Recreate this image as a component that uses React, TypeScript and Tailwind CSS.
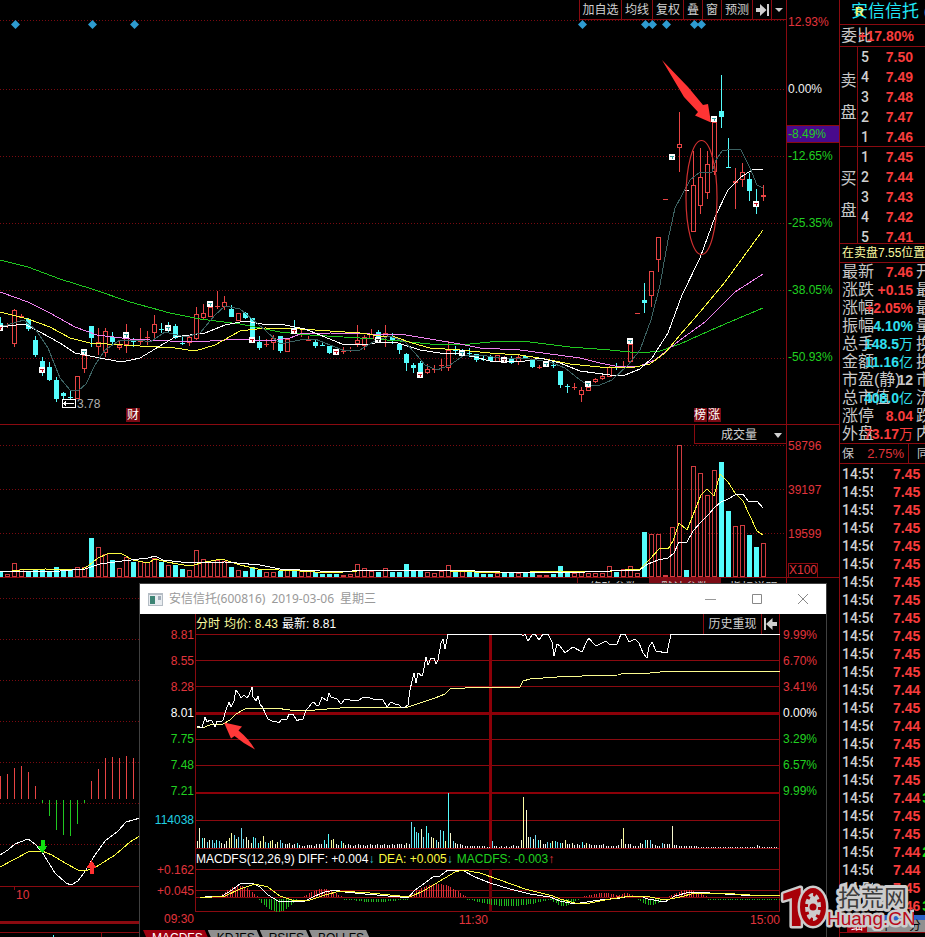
import type { ReactNode } from 'react';

type Candle = [kind: 'r' | 'c' | 'w', high: number, top: number, bottom: number, low: number];

const RED = '#e84444';
const CYAN = '#54fcfc';
const GRID = '#8a0a10';
const STEP = 7;

const candles: Candle[] = [
  ['c', 317, 323, 329, 331], ['r', 323, 325, 325, 328], ['r', 309, 310, 344, 347], ['r', 314, 316, 318, 318],
  ['c', 318, 319, 329, 331], ['c', 336, 340, 355, 357], ['c', 357, 361, 368, 376], ['c', 362, 367, 380, 381],
  ['c', 377, 380, 399, 402], ['c', 392, 393, 396, 399], ['c', 390, 397, 397, 399], ['r', 376, 376, 399, 399],
  ['r', 355, 355, 369, 373], ['c', 326, 326, 338, 347], ['r', 328, 342, 347, 355], ['r', 328, 331, 353, 357],
  ['c', 332, 337, 342, 345], ['r', 341, 345, 348, 350], ['r', 324, 337, 345, 353], ['c', 338, 341, 341, 347],
  ['r', 328, 341, 341, 345], ['r', 331, 337, 337, 345], ['r', 315, 324, 333, 340], ['c', 323, 329, 329, 333],
  ['c', 322, 328, 328, 333], ['c', 324, 326, 338, 339], ['c', 337, 343, 343, 345], ['r', 335, 337, 343, 346],
  ['r', 307, 314, 339, 340], ['r', 304, 313, 318, 319], ['r', 307, 307, 317, 317], ['r', 291, 306, 306, 309],
  ['r', 296, 302, 307, 310], ['c', 305, 309, 317, 317], ['r', 313, 313, 321, 321], ['c', 312, 313, 318, 319],
  ['c', 318, 318, 337, 338], ['c', 336, 342, 348, 350], ['r', 339, 344, 344, 347], ['r', 335, 338, 343, 350],
  ['c', 336, 336, 351, 353], ['r', 339, 339, 352, 352], ['c', 320, 330, 330, 334], ['r', 330, 334, 334, 337],
  ['r', 336, 340, 340, 341], ['c', 340, 342, 346, 348], ['c', 342, 345, 345, 346], ['c', 346, 346, 353, 354],
  ['r', 349, 352, 352, 354], ['r', 347, 351, 351, 354], ['r', 347, 349, 350, 352], ['r', 325, 340, 344, 347],
  ['r', 335, 337, 346, 350], ['r', 329, 334, 339, 339], ['c', 330, 332, 337, 342], ['r', 325, 333, 337, 347],
  ['c', 333, 336, 341, 344], ['c', 343, 344, 350, 354], ['c', 353, 354, 363, 371], ['c', 363, 365, 368, 373],
  ['c', 361, 363, 372, 374], ['r', 364, 369, 373, 374], ['r', 365, 369, 369, 373], ['r', 359, 365, 365, 371],
  ['r', 341, 350, 368, 371], ['c', 346, 350, 350, 355], ['c', 349, 350, 355, 355], ['c', 348, 353, 353, 357],
  ['c', 354, 354, 360, 362], ['c', 356, 359, 359, 361], ['c', 355, 357, 361, 361], ['r', 355, 355, 362, 362],
  ['r', 356, 359, 359, 363], ['c', 356, 359, 363, 364], ['r', 355, 357, 362, 365], ['c', 355, 356, 358, 359],
  ['c', 360, 360, 367, 368], ['r', 365, 367, 367, 369], ['c', 361, 364, 364, 367], ['c', 362, 365, 365, 368],
  ['c', 371, 371, 385, 388], ['c', 384, 386, 386, 393], ['r', 383, 387, 387, 390], ['r', 387, 390, 395, 402],
  ['r', 387, 387, 391, 391], ['r', 378, 379, 382, 383], ['r', 374, 376, 379, 380], ['r', 366, 367, 377, 377],
  ['c', 363, 367, 367, 370], ['r', 361, 366, 366, 368], ['r', 344, 344, 362, 362], ['r', 313, 313, 313, 313],
  ['c', 283, 300, 303, 313], ['r', 271, 271, 296, 307], ['r', 237, 237, 260, 272], ['r', 199, 199, 199, 199],
  ['c', 157, 157, 157, 159], ['r', 112, 144, 148, 172], ['w', 190, 190, 190, 190], ['r', 151, 185, 232, 232],
  ['r', 148, 177, 206, 214], ['r', 151, 164, 193, 199], ['r', 122, 122, 172, 175], ['c', 75, 111, 117, 128],
  ['c', 138, 167, 167, 167], ['r', 168, 181, 183, 209], ['r', 163, 172, 180, 187], ['c', 173, 179, 191, 201],
  ['c', 189, 203, 203, 214], ['r', 185, 195, 197, 201],
];

// white news flags, index / y / inner colour
const flags: [number, number, string][] = [
  [0, 325, '#c01020'], [6, 367, '#c01020'], [12, 349, '#30a0a0'], [18, 332, '#30a0a0'], [24, 325, '#30a0a0'],
  [30, 301, '#30a0a0'], [36, 337, '#c01020'], [42, 328, '#c01020'], [48, 349, '#c01020'], [54, 337, '#303030'],
  [60, 372, '#c01020'], [66, 350, '#30a0a0'], [72, 357, '#804040'], [78, 361, '#30a0a0'], [84, 381, '#30a0a0'],
  [90, 338, '#30a0a0'], [96, 154, '#30a0a0'], [102, 116, '#30a0a0'], [108, 201, '#c01020'],
];

const averages: [string, string][] = [
  ['#20c820', '0,260 28,267 60,279 92,289 130,302 170,313 200,319 240,324 280,332 310,335 360,338 400,341 440,345 470,344 500,341 530,342 570,347 610,350 640,353 660,351 680,344 700,335 725,324 763,308'],
  ['#ee82ee', '0,292 28,302 50,313 75,327 97,335 130,339 170,341 210,341 240,339 270,341 290,338 300,334 330,333 370,334 400,334 430,339 460,344 480,348 520,350 550,354 580,358 600,363 615,366 640,366 655,360 670,348 680,340 705,322 735,292 763,274'],
  ['#fcfc40', '0,312 28,319 50,327 70,338 90,343 140,346 175,348 195,351 215,345 240,331 265,328 300,329 330,331 360,333 380,336 395,337 412,343 430,348 460,350 490,353 520,355 545,359 570,364 600,367 630,368 650,364 665,353 680,335 700,312 725,282 763,230'],
  ['#ffffff', '0,327 24,324 40,332 60,343 75,353 90,356 105,359 122,362 140,358 155,349 175,337 205,333 225,325 245,321 262,324 285,325 305,329 320,335 342,344 370,344 380,342 398,343 420,350 440,353 460,354 475,357 490,361 520,362 540,358 560,363 580,371 610,375 625,375 640,369 652,358 668,333 682,295 700,258 715,217 728,190 741,177 752,170 763,169'],
  ['#3c6262', '0,327 24,320 36,330 48,348 60,378 70,390 78,391 86,384 95,365 105,350 120,340 140,340 150,342 165,332 185,337 200,333 215,315 225,306 240,309 252,319 265,330 280,344 300,340 315,339 335,347 345,351 360,350 375,341 390,336 405,342 415,353 425,365 437,370 450,365 463,356 480,355 500,358 530,359 550,362 565,368 580,380 590,386 600,385 612,380 628,365 640,350 651,320 660,285 668,240 675,208 682,195 690,180 700,172 712,172 716,160 722,151 733,149 741,150 750,168 757,185 763,188'],
];

// bar height in px and colour of each day's volume
const volumes =
  '5c 3r 14r 8r 6c 8c 7c 5c 10c 6c 7c 10r 10r 39c 30r 23r 17c 9r 20r 15c 16r 15r 19r 15c 12r 12c 8c 7r 27r 18r 15r 17r 16r 10c 7r 6c 10c 7c 5r 5r 6c 7r 8c 6r 6r 5c 3c 3c 3c 2r 3r 13r 9r 6r 5c 9r 5c 5c 13c 6c 6c 5r 4r 6r 12r 6c 6r 7c 5c 3c 3c 4r 5c 5c 4r 4c 4c 2r 2r 3c 11c 5c 4r 6r 4r 4r 4r 11r 5c 8r 11r 4r 45c 43r 43r 2r 50r 132r 7c 111r 104r 82r 107r 115c 66c 51r 52r 42c 30c 34r'.split(' ');

const volumeLines: [string, string][] = [
  ['#fcfc40', '0,571 12,571 20,570 45,569 80,570 88,566 98,558 107,554 115,553 122,554 133,560 148,563 155,559 167,562 178,564 190,566 205,562 222,559 240,565 258,569 300,571 330,573 370,570 400,570 450,571 500,573 560,571 600,572 625,570 640,569 650,559 660,548 668,549 673,541 679,523 687,530 695,510 701,495 707,489 714,496 720,474 728,482 735,493 743,501 750,516 757,531 763,535'],
  ['#ffffff', '0,572 30,571 60,571 85,569 100,564 122,561 148,558 155,556 163,560 190,563 225,562 260,565 280,569 320,571 345,572 360,570 400,570 450,570 500,572 560,573 610,571 640,570 648,564 658,560 668,558 674,553 679,542 687,542 693,531 701,522 709,514 714,508 721,502 728,499 735,495 743,494 749,502 757,501 763,508'],
];

const macdBars = [776, 774, 768, 766, 772, 786, 803, 816, 830, 835, 836, 824, 803, 781, 769, 758, 757, 758, 756, 758];

const minutePrice =
  '197,726 202,728 205,717 207,722 210,720 212,721 215,727 217,721 221,722 223,720 226,710 229,702 231,707 234,701 236,690 239,694 241,698 244,695 247,698 249,695 252,687 253,697 256,701 258,696 260,704 263,708 265,713 268,719 272,721 275,721 279,723 282,719 287,719 289,714 293,714 297,721 300,719 303,719 306,710 308,708 312,703 314,702 317,706 319,705 322,697 327,701 329,693 331,697 337,699 341,704 345,699 350,700 358,701 363,697 368,697 375,700 378,699 383,700 387,707 391,702 395,704 398,704 401,707 405,707 408,705 410,690 412,681 414,673 416,683 418,673 422,676 423,673 426,657 428,665 431,658 434,658 436,664 438,660 441,643 443,639 445,649 448,634 521,634 523,636 525,634 528,641 532,635 535,634 539,640 543,634 548,634 552,642 554,656 557,644 560,646 565,653 573,647 582,652 587,641 589,638 592,642 596,646 606,641 609,644 617,644 621,634 625,634 629,642 635,639 639,643 643,653 647,658 649,647 652,642 656,651 667,653 671,634 780,634';
const minuteAverage =
  '197,727 202,728 210,725 223,724 230,720 236,714 245,709 258,708 275,708 290,710 315,710 340,708 370,707 408,707 420,703 435,698 445,694 450,689 465,688 490,687 520,687 523,681 530,679 557,677 582,676 618,675 625,673 650,673 671,671 780,671';

const minuteVolume = [
  7, 20, 10, 10, 6, 8, 8, 5, 8, 7, 5, 4, 7, 10, 15, 13, 9, 11, 20, 9, 11, 8, 5, 11, 10, 5, 7, 12, 6, 5, 7, 8, 4, 6, 8, 5,
  4, 4, 5, 3, 4, 5, 3, 2, 2, 3, 3, 3, 2, 4, 4, 4, 8, 4, 14, 8, 9, 4, 3, 7, 5, 3, 4, 3, 2, 3, 4, 3, 3, 2, 3, 4, 3, 3, 4, 3,
  3, 4, 3, 3, 4, 3, 4, 4, 4, 3, 5, 4, 26, 21, 16, 15, 19, 11, 22, 15, 11, 10, 8, 6, 18, 17, 7, 55, 15, 7, 5, 4, 4, 3, 2,
  2, 2, 2, 2, 2, 2, 2, 2, 1, 1, 7, 2, 2, 1, 2, 1, 2, 1, 2, 3, 2, 2, 8, 51, 38, 11, 11, 9, 13, 8, 8, 4, 4, 6, 5, 7, 7, 6,
  5, 5, 8, 4, 4, 5, 3, 4, 3, 6, 3, 5, 4, 3, 3, 3, 3, 3, 4, 2, 2, 2, 2, 2, 3, 9, 20, 4, 4, 4, 2, 2, 2, 5, 4, 8, 8, 8, 4, 3,
  2, 2, 5, 4, 4, 4, 22, 3, 3, 2, 2, 2, 2, 2, 2, 2, 2, 1, 1, 1, 1, 1, 1, 1, 1, 1, 1, 1, 1, 1, 1, 1, 1, 1, 1, 1, 1, 1, 1,
  1, 1, 3, 2, 1, 1, 1, 1, 1, 1, 1,
];

// from, to, peak (negative runs hang below the zero line)
const histogram: [number, number, number][] = [
  [220, 258, 11], [259, 297, -13], [304, 342, 8], [344, 408, -3], [409, 466, 13], [467, 552, -7],
  [551, 578, -7], [584, 622, 4], [617, 634, 4], [638, 664, -6], [669, 706, 7], [708, 780, -1],
];

type Row = [label: string, value: string, unit: string, color: string, next: string];
const stats: Row[] = [
  ['最新', '7.46', '', 'text-[#f83c3c]', '开'],
  ['涨跌', '+0.15', '', 'text-[#f83c3c]', '最'],
  ['涨幅', '+2.05%', '', 'text-[#f83c3c]', '最'],
  ['振幅', '4.10%', '', 'text-[#30e0f0]', '量'],
  ['总手', '148.5', '万', 'text-[#30e0f0]', '换'],
  ['金额', '11.16', '亿', 'text-[#30e0f0]', '换'],
  ['市盈(静)', '12', '', 'text-[#c8c8c8]', '市'],
  ['总市值', '408.0', '亿', 'text-[#30e0f0]', '流'],
  ['涨停', '8.04', '', 'text-[#f83c3c]', '跌'],
  ['外盘', '73.17', '万', 'text-[#f83c3c]', '内'],
];

const ticks = [
  '7.45', '7.45', '7.45', '7.45', '7.45', '7.45', '7.45', '7.45', '7.45', '7.45', '7.45', '7.45', '7.44', '7.45',
  '7.44', '7.45', '7.45', '7.45', '7.44', '7.45', '7.45', '7.44', '7.44', '7.45', '7.46',
];

function Line({ points, color }: { points: string; color: string }) {
  return <polyline points={points} fill="none" stroke={color} />;
}

function Dotted({ y, width = 786 }: { y: number; width?: number }) {
  return <line x1="0" x2={width} y1={y} y2={y} stroke="#7a0a10" strokeDasharray="1 2" />;
}

function Toolbar() {
  const item = 'flex h-full items-center justify-center border-l border-[#8a0a10] hover:bg-[#300]';
  return (
    <nav className="flex h-5 justify-end text-xs text-[#d0d0d0]">
      <div className="flex h-full border-b border-[#8a0a10]">
        <button className={`${item} w-[42px]`}>加自选</button>
        <button className={`${item} w-[31px]`}>均线</button>
        <button className={`${item} w-[31px]`}>复权</button>
        <button className={`${item} w-[19px]`}>叠</button>
        <button className={`${item} w-[19px]`}>窗</button>
        <button className={`${item} w-[31px]`}>预测</button>
        <button className={`${item} w-[19px]`} aria-label="下一只">
          <svg width="13" height="12" viewBox="0 0 13 12" fill="#d0d0d0">
            <path d="M0 4h4V0l6.500 6L4 12V8H0zM11 0h2v12h-2z" />
          </svg>
        </button>
        <button className={`${item} w-[15px]`} aria-label="更多">
          <svg width="8" height="4" viewBox="0 0 8 4" fill="#d0d0d0">
            <path d="M0 0h8L4 4z" />
          </svg>
        </button>
      </div>
    </nav>
  );
}

function PriceChart() {
  return (
    <section className="relative h-[405px]">
      <svg className="block h-full w-full" viewBox="0 20 786 405" preserveAspectRatio="none" shapeRendering="crispEdges">
        {[20.5, 89.5, 156.5, 223.5, 290.5, 358.5].map((y) => (
          <Dotted key={y} y={y} />
        ))}
        <line x1="0" x2="786" y1="424.5" y2="424.5" stroke={GRID} />
        {[15, 92, 134, 582, 645, 652, 666, 694, 701].map((x) => (
          <path key={x} d={`M${x - 4} 24.5l4.5-4.5 4.5 4.5-4.5 4.5z`} fill="#2e9bd0" shapeRendering="auto" />
        ))}
        {candles.map(([kind, high, top, bottom, low], i) => {
          const x = i * STEP + 0.5;
          const color = kind === 'r' ? RED : kind === 'c' ? CYAN : '#ffffff';
          if (top === bottom) {
            return (
              <path key={i} d={`M${x - 2.5} ${top + 0.5}h5M${x} ${high}V${low}`} stroke={color} />
            );
          }
          return (
            <g key={i} stroke={color}>
              <path d={`M${x} ${high}V${top}M${x} ${bottom}V${low}`} />
              <rect x={x - 2} y={top + 0.5} width="4" height={bottom - top - 1} fill={kind === 'c' ? CYAN : 'none'} />
            </g>
          );
        })}
        {averages.map(([color, points]) => (
          <Line key={color} points={points} color={color} />
        ))}
        {flags.map(([i, y, color]) => (
          <g key={i}>
            <rect x={i * STEP - 3} y={y} width="6" height="6" fill="#ffffff" />
            <path d={`M${i * STEP - 2} ${y + 2.5}h4M${i * STEP + 0.5} ${y + 2}v3`} stroke={color} />
          </g>
        ))}
        <g shapeRendering="auto">
          <ellipse cx="701.5" cy="197.5" rx="15.5" ry="57" fill="none" stroke="#d03030" strokeWidth="1.2" />
          <path d="M662 60L688 87 703 105 708 104 711 122.500 695 115.500 698 112 684 97z" fill="#ff3434" />
        </g>
        <path d="M62.500 399.500h13v8h-13zM64 403.500h10M66 401.500l-2 2 2 2" fill="none" stroke="#ffffff" />
      </svg>
      <span className="absolute top-[376px] left-[77px] text-xs text-[#b0b0b0]">3.78</span>
      <span className="absolute top-[388px] left-[126px] w-3.5 bg-[#7c0a14] text-center text-xs leading-[14px] text-white">财</span>
      <div className="absolute top-[388px] left-[694px] flex gap-px text-xs leading-[14px] text-white">
        <span className="w-[13px] bg-[#7c0a14]">榜</span>
        <span className="w-[13px] bg-[#7c0a14]">涨</span>
      </div>
    </section>
  );
}

function VolumeChart() {
  return (
    <section className="relative h-[153px]">
      <svg className="block h-full w-full" viewBox="0 425 786 153" preserveAspectRatio="none" shapeRendering="crispEdges">
        {[445.5, 489.5, 533.5].map((y) => (
          <Dotted key={y} y={y} />
        ))}
        {volumes.map((v, i) => {
          const height = parseInt(v, 10);
          const x = i * STEP - 2;
          return v.endsWith('c') ? (
            <rect key={i} x={x} y={577 - height} width="5" height={height} fill={CYAN} />
          ) : (
            <rect key={i} x={x + 0.5} y={577.5 - height} width="4" height={height - 1} fill="none" stroke="#d03c40" />
          );
        })}
        {volumeLines.map(([color, points]) => (
          <Line key={color} points={points} color={color} />
        ))}
        <line x1="0" x2="786" y1="577.5" y2="577.5" stroke={GRID} />
      </svg>
      <button className="absolute top-0 right-0 flex h-[19px] w-[92px] items-center justify-end gap-[17px] border-b border-l border-[#8a0a10] bg-black pt-0.5 pr-1 text-xs text-[#d0d0d0]">
        成交量
        <svg width="8" height="5" viewBox="0 0 8 5" fill="#d0d0d0">
          <path d="M0 0h8L4 5z" />
        </svg>
      </button>
    </section>
  );
}

function IndicatorPanel() {
  return (
    <section className="relative min-h-0 flex-1">
      <div className="absolute top-0 right-0 flex h-5 items-center text-xs text-[#c8c8c8]">
        <button className="h-full w-[72px] border-l border-[#8a0a10]">修改参数</button>
        <button className="h-full w-[72px] bg-[#7c0a14]">默认参数</button>
        <button className="h-full w-[65px]">指标说明</button>
      </div>
      <svg className="block h-[359px] w-[140px]" viewBox="0 578 140 359" shapeRendering="crispEdges">
        {[598.5, 639.5, 680.5, 721.5, 762.5, 803.5, 844.5].map((y) => (
          <Dotted key={y} y={y} width={140} />
        ))}
        {macdBars.map((y, i) =>
          y < 800 ? (
            <line key={i} x1={i * STEP + 0.5} x2={i * STEP + 0.5} y1={y} y2="799" stroke={RED} />
          ) : (
            <line key={i} x1={i * STEP + 0.5} x2={i * STEP + 0.5} y1="800" y2={y} stroke="#20c820" />
          ),
        )}
        <Line color="#ffffff" points="0,855 8,850 15,844 28,839 35,844 42,852 55,873 66,883 71,885 78,881 84,873 95,855 105,841 118,831 126,822 140,818" />
        <Line color="#fcfc40" points="0,867 15,859 28,852 42,851 52,855 65,863 78,870 88,870 96,867 115,855 130,842 140,836" />
        <path d="M40.500 840h4v6h3l-5 7.500-5-7.500h3z" fill="#10e010" />
        <path d="M89.500 874h4v-6h3l-5-8-5 8h3z" fill="#ff3030" />
        <path d="M0 886.500h140M14.500 886v4M0 932.500h140M101.500 932v5" stroke={GRID} />
        <path d="M0 922.500h140" stroke={GRID} strokeWidth="3" />
        <path d="M53.500 935v2" stroke={CYAN} />
      </svg>
      <span className="absolute top-[309px] left-4 text-xs text-[#e0343c]">10</span>
    </section>
  );
}

function PriceAxis() {
  const labels = ['12.93%', '0.00%', '-12.65%', '-25.35%', '-38.05%', '-50.93%'];
  const tone = (i: number) => (i === 0 ? 'text-[#e0343c]' : i === 1 ? 'text-[#f0f0f0]' : 'text-[#20d020]');
  return (
    <aside className="flex w-[53px] flex-col border-l border-[#8a0a10] text-xs leading-4">
      <div className="relative h-[424px] pt-[14px]">
        {labels.map((label, i) => (
          <div key={label} className={`h-[67px] pl-px ${tone(i)}`}>{label}</div>
        ))}
        <div className="absolute top-[125px] left-0 h-[18px] w-full border-y border-[#8a0a10] bg-[#480a8c] pl-px text-[#20d020]">-8.49%</div>
      </div>
      <div className="h-[154px] border-y border-[#8a0a10] pt-[13px] pl-px text-[#e0343c]">
        <div className="h-11">58796</div>
        <div className="h-11">39197</div>
        <div className="h-9">19599</div>
        <span className="inline-block border border-[#8a0a10] leading-[13px]">X100</span>
      </div>
    </aside>
  );
}

function Levels({ side, rows }: { side: string; rows: [string, string][] }) {
  return (
    <div className="flex h-full overflow-hidden">
      <div className="flex w-[18px] shrink-0 flex-col items-center justify-center gap-4 border-r border-[#8a0a10] text-base leading-4 text-[#c8c8c8]">
        <span>{side}</span>
        <span>盘</span>
      </div>
      <table className="h-[100px] border-collapse text-sm">
        <tbody>
          {rows.map(([level, price]) => (
            <tr key={level} className="h-5 leading-[18px]">
              <td className="w-[18px] p-0 pl-[3px] font-medium text-[#d0d0d0] font-['Roboto',sans-serif]">{level}</td>
              <td className="w-[37px] p-0 text-right font-bold text-[#f83c3c]">{price}</td>
            </tr>
          ))}
        </tbody>
      </table>
    </div>
  );
}

function Sidebar() {
  return (
    <aside className="flex w-[86px] flex-col overflow-hidden border-l border-[#8a0a10] whitespace-nowrap">
      <h1 className="relative -ml-px h-6 shrink-0 bg-black pl-3 text-[17px] leading-[23px] text-[#20e8f8]">
        安信信托 (
        <span className="absolute top-0 left-4 text-xs leading-6 font-bold text-[#f8f870]">R</span>
      </h1>
      <div className="flex h-[22px] shrink-0 items-center border-t border-[#8a0a10] pl-px">
        <span className="w-0 text-base text-[#c8c8c8]">委比</span>
        <span className="w-[73px] text-right text-sm font-bold text-[#f83c3c]">+17.80%</span>
      </div>
      <div className="h-[100px] shrink-0 border-t border-[#8a0a10]">
        <Levels side="卖" rows={[['5', '7.50'], ['4', '7.49'], ['3', '7.48'], ['2', '7.47'], ['1', '7.46']]} />
      </div>
      <div className="h-[97px] shrink-0 border-t border-[#8a0a10]">
        <Levels side="买" rows={[['1', '7.45'], ['2', '7.44'], ['3', '7.43'], ['4', '7.42'], ['5', '7.41']]} />
      </div>
      <p className="h-[19px] shrink-0 border-t border-[#8a0a10] pl-0.5 text-xs leading-[18px] text-[#fcfca0]">在卖盘7.55位置</p>
      <dl className="shrink-0 border-t border-[#8a0a10] pl-0.5">
        {stats.map(([label, value, unit, color, next]) => (
          <div key={label} className="flex h-[18px] items-center leading-[18px]">
            <dt className="w-0 text-base leading-[18px] text-[#c8c8c8]">{label}</dt>
            <dd className={`flex w-[71px] shrink-0 justify-end text-sm leading-[18px] font-bold ${color}`}>
              {value}
              <span className="font-normal">{unit}</span>
            </dd>
            <span className="ml-[3px] text-base leading-[18px] text-[#c8c8c8]">{next}</span>
          </div>
        ))}
      </dl>
      <div className="flex h-5 shrink-0 items-center border-t border-[#8a0a10] pl-0.5 text-xs text-[#c8c8c8]">
        <span className="shrink-0">保</span>
        <span className="flex h-full w-[55px] shrink-0 items-center justify-end border-r border-[#8a0a10] pr-1 text-[13px] text-[#e0343c]">2.75%</span>
        <span className="ml-2 shrink-0">同</span>
      </div>
      <div className="shrink-0 border-t border-[#8a0a10] pt-px">
        <table className="table-fixed border-collapse text-sm">
          <tbody>
            {ticks.map((price, i) => (
              <tr key={i} className="h-[18px] leading-[18px]">
                <td className="p-0 pl-0.5">
                  <div className="w-[31px] overflow-hidden font-medium text-[#d0d0d0] font-['Roboto',sans-serif]">
                    {i < 3 ? '14:55' : '14:56'}
                  </div>
                </td>
                <td className="p-0 pl-5 font-bold text-[#f83c3c]">{price}</td>
                <td className="p-0 pl-0.5 font-bold text-[#10e010]">{i === 18 ? '3' : i === 21 ? '2' : i === 24 ? '3' : ''}</td>
              </tr>
            ))}
          </tbody>
        </table>
      </div>
      <div className="mb-1 flex h-[18px] shrink-0 items-end border-b border-[#8a0a10] bg-linear-to-b from-[#2a62c8] from-30% to-black to-30% pl-[7px] text-xs leading-3 text-white">
        <button className="w-5 shrink-0 bg-[#a00010]">细</button>
        <button className="w-8 shrink-0 bg-[#909090] text-black">价</button>
        <button className="w-8 shrink-0 bg-[#909090] text-black">分</button>
      </div>
    </aside>
  );
}

function AxisLabels({ labels, align }: { labels: string[]; align: string }) {
  return (
    <div className={`pt-2 ${align}`}>
      {labels.map((label, i) => (
        <div
          key={i}
          className={`h-[26px] leading-[26px] ${i < 3 ? 'text-[#e0343c]' : i === 3 ? 'text-white' : 'text-[#20d020]'}`}
        >
          {label}
        </div>
      ))}
    </div>
  );
}

function Tab({ active, children }: { active?: boolean; children: ReactNode }) {
  return (
    <button
      className={`-mr-1 h-4 px-[9px] text-xs leading-4 [clip-path:polygon(0_0,calc(100%-7px)_0,100%_100%,7px_100%)] ${
        active ? 'bg-[#a00010] text-white' : 'bg-[#909090] text-black'
      }`}
    >
      {children}
    </button>
  );
}

function MinuteWindow() {
  const bars = histogram.flatMap(([from, to, peak]) => {
    const out: [number, number][] = [];
    for (let x = from; x < to; x += 2.44) {
      const h = Math.max(1, Math.abs(peak) * Math.sin((Math.PI * (x - from + 1)) / (to - from + 1)));
      out.push([Math.round(x) + 0.5, peak > 0 ? h : -h]);
    }
    return out;
  });

  return (
    <div
      role="dialog"
      aria-label="历史分时"
      className="absolute top-[584px] right-[99px] bottom-0 left-[140px] flex flex-col overflow-hidden bg-black text-xs outline outline-[#404040]"
    >
      <header className="flex h-[30px] shrink-0 items-center bg-white pr-[17px] pl-2 text-[#999] font-['Noto_Sans','Noto_Sans_CJK_SC',sans-serif]">
        <svg width="15" height="13" viewBox="0 0 15 13" className="mr-1.5">
          <path d="M0 0h15v13H0z" fill="#b4bcc4" />
          <path d="M1 2h13v10H1z" fill="#e8ecf0" />
          <path d="M2 3h5v8H2z" fill="#3c8474" />
          <path d="M10 3h3v4h-3z" fill="#a0acb8" />
        </svg>
        <h2 className="flex flex-1 gap-1.5">
          <span>安信信托(600816)</span>
          <span>2019-03-06</span>
          <span>星期三</span>
        </h2>
        <div className="flex gap-[34px]">
          <button aria-label="最小化">
            <svg width="12" height="12" viewBox="0 0 12 12" stroke="#999"><path d="M0 6.500h11" /></svg>
          </button>
          <button aria-label="最大化">
            <svg width="12" height="12" viewBox="0 0 12 12" stroke="#888" fill="none"><path d="M1.500 1.500h9v9h-9z" /></svg>
          </button>
          <button aria-label="关闭">
            <svg width="12" height="12" viewBox="0 0 12 12" stroke="#888"><path d="M1 1l10 10M11 1L1 11" /></svg>
          </button>
        </div>
      </header>

      <div className="grid shrink-0 grid-cols-[55px_1fr_46px]">
        <div className="pr-px text-right text-[#e0343c]">
          <AxisLabels align="text-right" labels={['8.81', '8.55', '8.28', '8.01', '7.75', '7.48', '7.21']} />
          <div className="h-[58px] pt-2 text-[#20d0e0]">114038</div>
          <div className="h-[21px]">+0.162</div>
          <div className="h-[28px]">+0.045</div>
          <div className="h-4 leading-4">09:30</div>
        </div>

        <div>
          <div className="flex h-5 justify-between border-l border-[#8a0a10] leading-5 whitespace-nowrap">
            <p className="flex gap-1 text-[#fcfca0]">
              <span>分时</span>
              <span>均价: 8.43</span>
              <span className="text-white">最新: 8.81</span>
            </p>
            <div className="flex border-r border-[#8a0a10] text-[#d0d0d0]">
              <button className="w-[58px] border-l border-[#8a0a10]">历史重现</button>
              <button className="flex w-[18px] items-center justify-center border-l border-[#8a0a10]" aria-label="返回">
                <svg width="13" height="12" viewBox="0 0 13 12" fill="#d0d0d0">
                  <path d="M0 0h2v12H0zM2 6l6.500-6v4H13v4H8.500v4z" />
                </svg>
              </button>
            </div>
          </div>
          <svg className="block h-[215px] w-full" viewBox="195 634 585 215" preserveAspectRatio="none" shapeRendering="crispEdges">
            <path d="M195 634.500h585M195 660.500h585M195 686.500h585M195 739.500h585M195 765.500h585M195 820.500h585M195 848.500h585M195.500 634v215M779.500 634v215" stroke={GRID} />
            <path d="M195 713.500h585M490 634v215" stroke="#8c0008" strokeWidth="3" />
            <path d="M195 793h585" stroke="#8c0008" strokeWidth="2" />
            {minuteVolume.map((h, i) => (
              <rect
                key={i}
                x={Math.round(197 + i * 2.434)}
                y={848 - h}
                width="1"
                height={h}
                fill={h < 5 || i > 196 ? '#f0f0f0' : [CYAN, '#fcfca0', '#70d8f0', '#f8f8d0'][(i * 7 + h) % 4]}
              />
            ))}
            <Line points={minuteAverage} color="#fcfc90" />
            <Line points={minutePrice} color="#ffffff" />
            <path d="M224 722.500L242 726.500 238.500 730.500Q249 739 255 749.500 244 744 234.500 736L231 738.500z" fill="#ff3838" shapeRendering="auto" />
          </svg>
          <p className="flex h-5 gap-1 border-x border-[#8a0a10] leading-5 whitespace-nowrap text-white">
            <span>MACDFS(12,26,9) DIFF: +0.004<span className="text-[#30c0d0]">↓</span></span>
            <span className="text-[#fcfc40]">DEA: +0.005<span className="text-[#30c0d0]">↓</span></span>
            <span className="text-[#20d020]">MACDFS: -0.003<span className="text-[#e0343c]">↑</span></span>
          </p>
          <svg className="block h-[43px] w-full" viewBox="195 869 585 43" preserveAspectRatio="none" shapeRendering="crispEdges">
            <path d="M195 869.500h585M195 890.500h585M195 897.500h585M195 911.500h585M195.500 869v43M779.500 869v43" stroke={GRID} />
            <path d="M490 869v43" stroke="#6c0008" strokeWidth="3" />
            {bars.map(([x, h], i) => (
              <line key={i} x1={x} x2={x} y1={h > 0 ? 897 : 899} y2={(h > 0 ? 897 : 899) - h} stroke={h > 0 ? '#d83038' : '#20b820'} />
            ))}
            <Line color="#ffffff" points="200,898 210,896 222,896 232,890 240,884 252,883 260,887 268,895 278,901 290,902 305,901 315,896 325,892 335,890 345,892 365,894 400,897 408,898 415,890 425,883 433,877 440,876 448,870 462,870 475,877 490,883 510,889 530,894 550,897 560,901 570,903 580,903 600,900 620,898 630,896 640,896 648,899 665,902 675,896 690,892 710,893 740,895 780,896" />
            <Line color="#fcfc40" points="200,898 225,896 240,889 255,884 268,887 280,896 295,901 310,900 325,895 340,891 370,893 400,896 410,897 425,890 440,881 455,872 463,870 480,873 500,880 525,889 553,896 560,899 575,903 590,903 605,900 630,896 645,896 665,900 680,897 695,893 720,893 750,895 780,896" />
          </svg>
          <div className="flex h-4 justify-between leading-4 text-[#e0343c]">
            <span className="w-[293px] text-right">11:30</span>
            <span>15:00</span>
          </div>
        </div>

        <AxisLabels align="pl-[3px]" labels={['9.99%', '6.70%', '3.41%', '0.00%', '3.29%', '6.57%', '9.99%']} />
      </div>

      <div className="mt-[2px] flex pl-[3px]">
        <Tab active>MACDFS</Tab>
        <Tab>KDJFS</Tab>
        <Tab>RSIFS</Tab>
        <Tab>BOLLFS</Tab>
      </div>
    </div>
  );
}

function Watermark() {
  return (
    <svg className="absolute right-[11px] bottom-1.5 h-[50px] w-[134px]" viewBox="780 881 134 50">
      <g paintOrder="stroke" stroke="#cccccc" strokeLinejoin="round">
        <text x="838" y="906" fontSize="23" strokeWidth="6" fill="#3c3c3c">拾荒网</text>
        <text x="827" y="925" fontSize="19" strokeWidth="5" fill="#b80818">Huang.CN</text>
      </g>
      <g stroke="#cccccc" strokeWidth="5" strokeLinejoin="round" paintOrder="stroke" className="font-['Roboto',sans-serif]">
        <text x="779" y="926" fontSize="53" fontWeight="900" fill="#a80008">1</text>
        <ellipse cx="813" cy="907" rx="13" ry="19" fill="#a80008" />
      </g>
      <ellipse cx="813" cy="907" rx="8" ry="14" fill="#cccccc" />
      <ellipse cx="813" cy="907" rx="7" ry="13" fill="none" stroke="#a80008" strokeWidth="4" strokeDasharray="3 5" />
      <circle cx="813" cy="907" r="3.500" fill="#a80008" />
    </svg>
  );
}

export default function App() {
  return (
    <div className="relative flex h-screen overflow-hidden bg-black font-['Liberation_Sans','Noto_Sans_CJK_SC',sans-serif]">
      <main className="flex min-w-0 flex-1 flex-col">
        <Toolbar />
        <PriceChart />
        <VolumeChart />
        <IndicatorPanel />
      </main>
      <PriceAxis />
      <Sidebar />
      <MinuteWindow />
      <Watermark />
    </div>
  );
}
